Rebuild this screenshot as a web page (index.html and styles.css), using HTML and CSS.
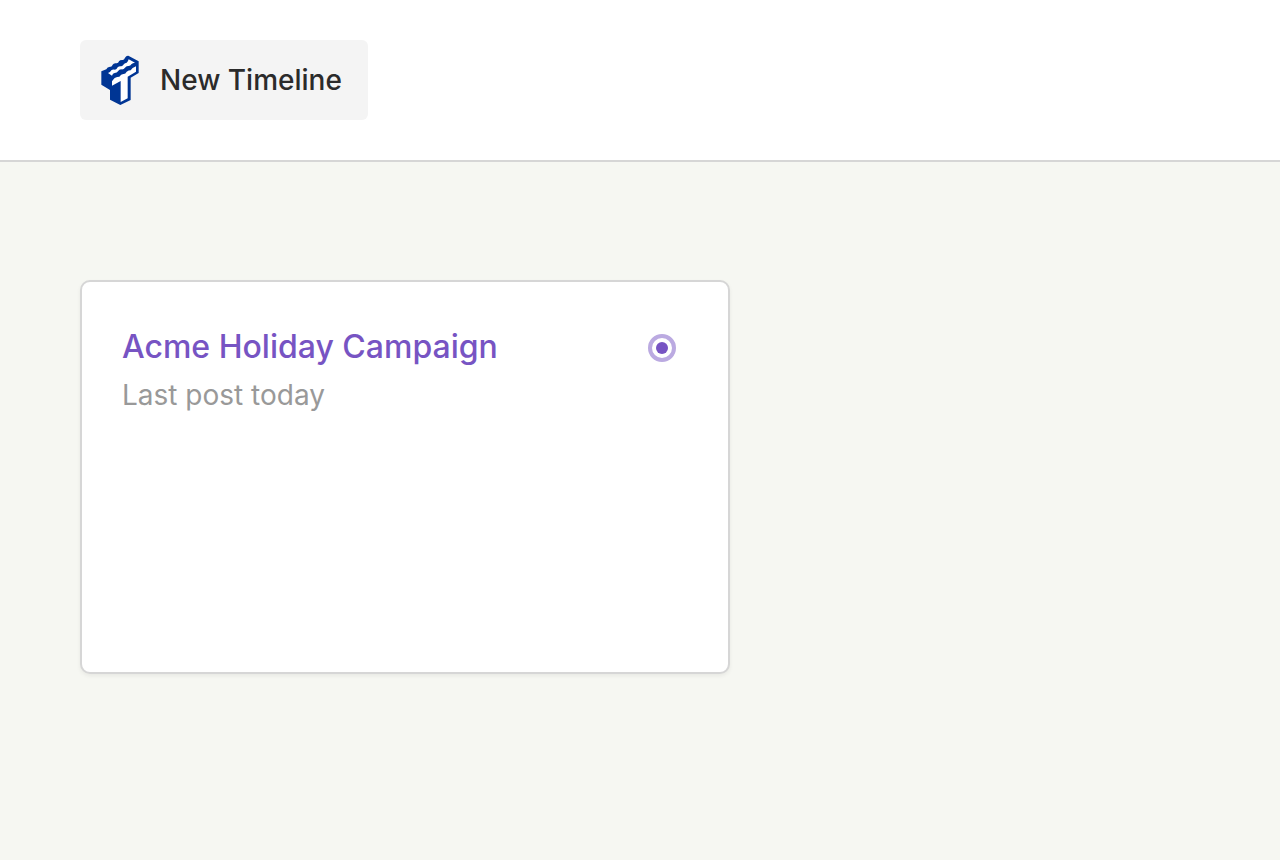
FILE: index.html
```html
<!DOCTYPE html>
<html lang="en">
<head>
    <meta charset="UTF-8">
    <meta name="viewport" content="width=device-width, initial-scale=1.0">
    <title>Timelines</title>
    <link rel="stylesheet" href="styles.css">
</head>
<body>

<header class="topbar">
    <button type="button" class="new-timeline">
        <svg class="logo" viewBox="30 30 120 150" aria-hidden="true">
            <path fill="#003594" d="M115 32L146 49V84L122 98V165L91 180L60 164V135L34 119V79L49 73Q52 64 62 65Q66 65 68 59Q71 53 80 55Q85 55 87 49Q90 44 99 45Q103 44 105 38Q109 31 115 32Z"/>
            <path fill="#fff" d="M54 84Q61 82 64 76Q67 73 75 74Q80 74 83 67Q87 63 94 64Q99 63 102 57Q105 54 110 53Q114 50 116 43L135 53Q128 53 124 58Q121 64 114 63Q108 63 105 68Q101 74 94 73Q87 73 84 79Q81 84 74 84Q68 85 66 92Z"/>
            <path fill="#fff" d="M66 109Q69 104 74 99Q82 95 88 95Q93 88 100 87Q106 88 110 80Q116 76 122 76Q126 68 138 64V80L113 95V160L92 171V108L66 122Z"/>
        </svg>
        <span>New Timeline</span>
    </button>
</header>

<main class="timelines">
    <article class="card">
        <div class="card-text">
            <h2><a href="#">Acme Holiday Campaign</a></h2>
            <p>Last post today</p>
        </div>
        <span class="status"></span>
    </article>
</main>

</body>
</html>
```

FILE: styles.css
```css
* {
    box-sizing: border-box;
}
body {
    margin: 0;
    background: #f6f7f2;
    color: #2b2b2b;
    font-family: Inter, "Liberation Sans", sans-serif;
}
.topbar {
    padding: 40px 80px;
    background: #fff;
    border-bottom: 2px solid #d6d6d6;
}
.new-timeline {
    display: flex;
    align-items: center;
    gap: 20px;
    min-width: 288px;
    height: 80px;
    padding: 0 20px;
    border: none;
    border-radius: 6px;
    background: #f4f4f4;
    color: #2b2b2b;
    font-family: inherit;
    font-size: 28px;
    font-weight: 500;
    line-height: 40px;
    cursor: pointer;
}
.logo {
    display: block;
    width: 40px;
    height: 50px;
}
.timelines {
    display: grid;
    grid-template-columns: repeat(auto-fill, minmax(540px, 650px));
    gap: 40px;
    padding: 118px 80px;
}
.card {
    display: flex;
    justify-content: space-between;
    align-items: flex-start;
    min-height: 394px;
    padding: 40px;
    background: #fff;
    border: 2px solid #d6d6d6;
    border-radius: 10px;
    box-shadow: 0 2px 4px rgba(0, 0, 0, 0.06);
}
.card h2 {
    margin: 0;
    font-size: 32px;
    line-height: 50px;
    font-weight: 500;
}
.card a {
    color: #7754c3;
    text-decoration: none;
}
.card p {
    margin: 0;
    color: #999;
    font-size: 28px;
    line-height: 46px;
}
.status {
    display: flex;
    align-items: center;
    justify-content: center;
    width: 28px;
    height: 28px;
    margin: 12px;
    border: 4px solid #bbaae1;
    border-radius: 50%;
}
.status::before {
    content: "";
    width: 12px;
    height: 12px;
    border-radius: 50%;
    background: #7754c3;
}
```
